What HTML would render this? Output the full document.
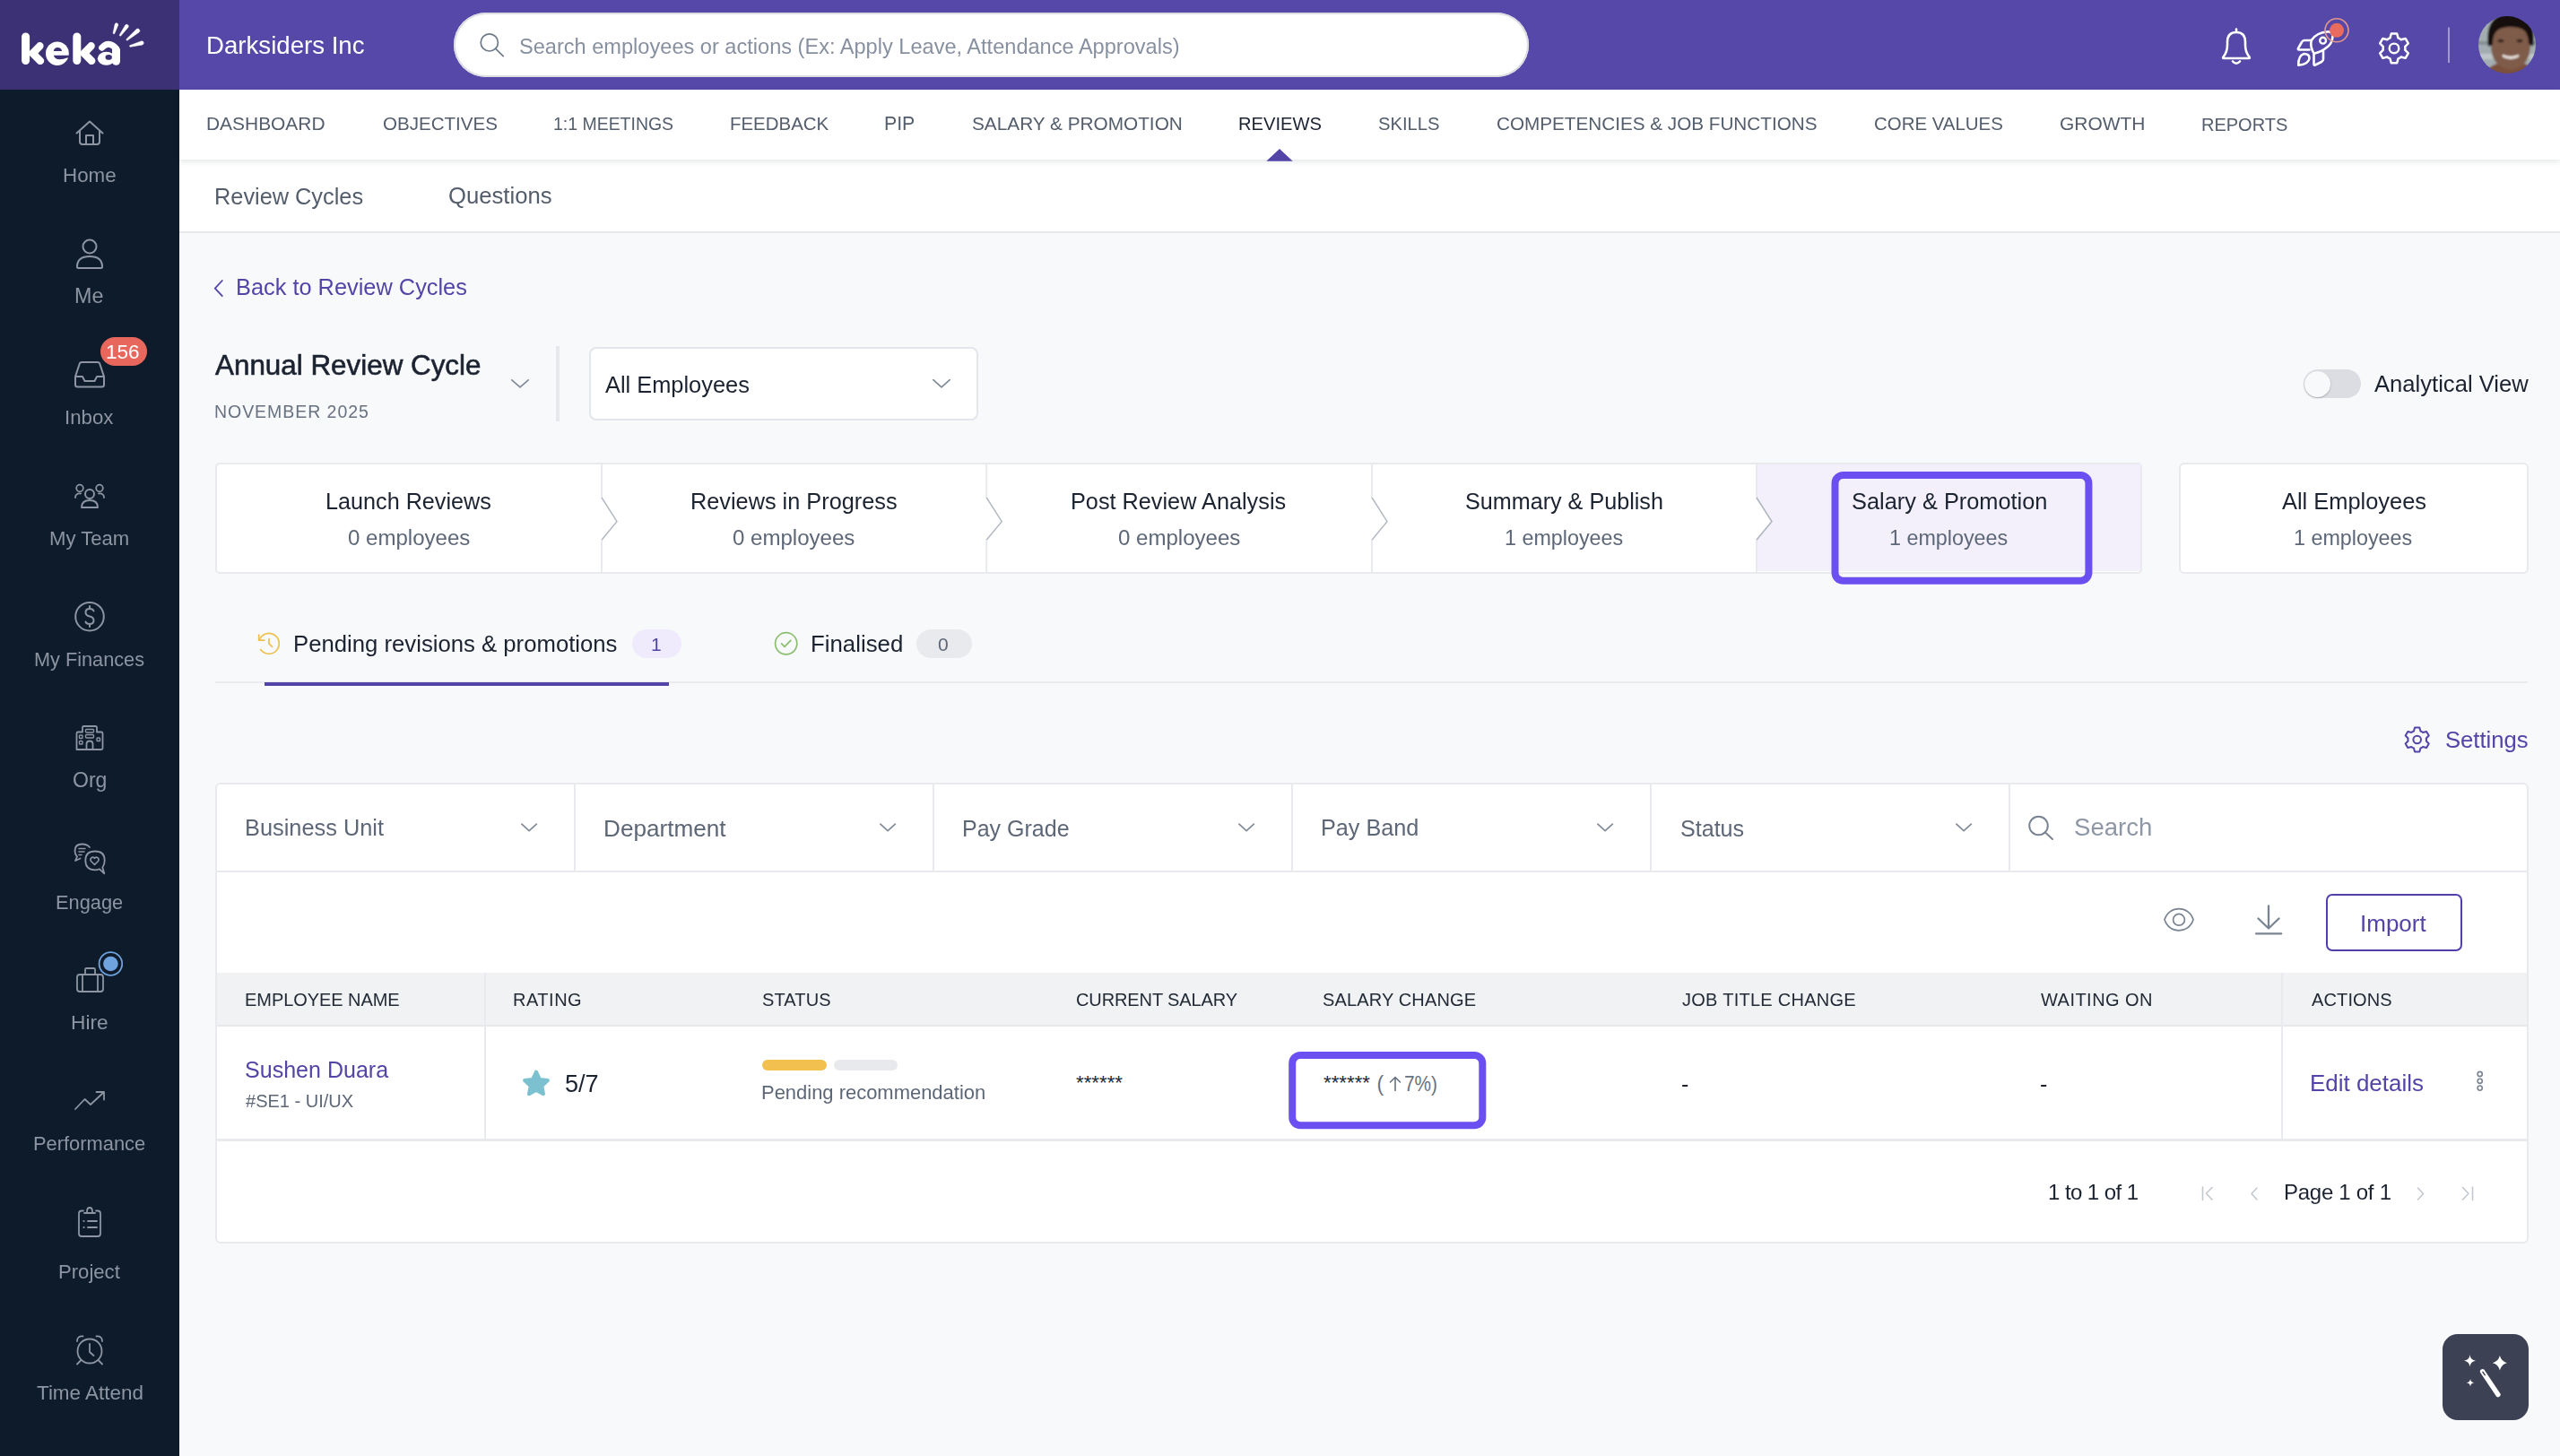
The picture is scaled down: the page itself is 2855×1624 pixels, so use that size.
<!DOCTYPE html>
<html><head><meta charset="utf-8"><title>Keka - Reviews</title>
<style>
html,body{margin:0;padding:0;width:2855px;height:1624px;overflow:hidden;background:#f8f9fb;}
body{position:relative;font-family:"Liberation Sans",sans-serif;}
.b{position:absolute;}
.t{position:absolute;line-height:1;white-space:pre;z-index:5;will-change:transform;}
.ov{position:absolute;left:0;top:0;z-index:4;overflow:visible;}
.ov text{font-family:"Liberation Sans",sans-serif;}
</style></head>
<body>
<div class="b" style="left:0px;top:0px;width:200px;height:1624px;background:#0e1b2a"></div>
<div class="b" style="left:0px;top:0px;width:200px;height:100px;background:#3c3174"></div>
<div class="b" style="left:200px;top:0px;width:2655px;height:100px;background:#5548a9"></div>
<div class="b" style="left:506px;top:14px;width:1199px;height:72px;background:#fff;border-radius:36px;box-shadow:inset 0 0 0 2px #dcdde3"></div>
<div class="b" style="left:200px;top:100px;width:2655px;height:78px;background:#fff;z-index:2;box-shadow:0 2px 6px rgba(20,30,50,0.12)"></div>
<div class="b" style="left:200px;top:178px;width:2655px;height:80px;background:#fff"></div>
<div class="b" style="left:200px;top:258px;width:2655px;height:2px;background:#e6e8ec"></div>
<div class="b" style="left:200px;top:260px;width:2655px;height:1364px;background:#f8f9fb"></div>
<div class="b" style="left:620px;top:385.5px;width:4px;height:84.5px;background:#e6e8ec"></div>
<div class="b" style="left:657px;top:387px;width:434px;height:82px;background:#fff;border:2px solid #e3e6ea;border-radius:8px;box-sizing:border-box"></div>
<div class="b" style="left:2569px;top:412px;width:64px;height:32px;background:#dcdde3;border-radius:16px"></div>
<div class="b" style="left:2570px;top:413.5px;width:29px;height:29px;background:#f8f9fb;border-radius:50%;box-shadow:0 1px 2px rgba(0,0,0,0.25)"></div>
<div class="b" style="left:240px;top:516px;width:2149px;height:124px;background:#fff;border:2px solid #e8eaed;border-radius:5px;box-sizing:border-box"></div>
<div class="b" style="left:2430px;top:516px;width:390px;height:124px;background:#fff;border:2px solid #e8eaed;border-radius:6px;box-sizing:border-box"></div>
<div class="b" style="left:240px;top:759.5px;width:2579px;height:2.5px;background:#e9ebee"></div>
<div class="b" style="left:295px;top:760.5px;width:451px;height:4px;background:#5345a8"></div>
<div class="b" style="left:705px;top:702px;width:55px;height:32px;background:#efebfc;border-radius:16px"></div>
<div class="b" style="left:1022px;top:702px;width:62px;height:32px;background:#e9eaed;border-radius:16px"></div>
<div class="b" style="left:240px;top:873px;width:2580px;height:514px;background:#fff;border:2px solid #e8eaed;border-radius:6px;box-sizing:border-box"></div>
<div class="b" style="left:640px;top:874px;width:2px;height:97px;background:#e8eaed"></div>
<div class="b" style="left:1040px;top:874px;width:2px;height:97px;background:#e8eaed"></div>
<div class="b" style="left:1440px;top:874px;width:2px;height:97px;background:#e8eaed"></div>
<div class="b" style="left:1840px;top:874px;width:2px;height:97px;background:#e8eaed"></div>
<div class="b" style="left:2240px;top:874px;width:2px;height:97px;background:#e8eaed"></div>
<div class="b" style="left:242px;top:970.5px;width:2576px;height:2.5px;background:#e8eaed"></div>
<div class="b" style="left:2594px;top:997px;width:152px;height:64px;background:#fff;border:2.5px solid #4f40ae;border-radius:7px;box-sizing:border-box"></div>
<div class="b" style="left:242px;top:1085px;width:2576px;height:59px;background:#f1f2f4"></div>
<div class="b" style="left:242px;top:1143px;width:2576px;height:2px;background:#e6e8eb"></div>
<div class="b" style="left:540px;top:1085px;width:2px;height:186px;background:#e8eaed"></div>
<div class="b" style="left:2544px;top:1085px;width:2px;height:186px;background:#e8eaed"></div>
<div class="b" style="left:242px;top:1270px;width:2576px;height:2.5px;background:#e8eaed"></div>
<div class="b" style="left:849.8px;top:1181.8px;width:72px;height:12px;background:#f1c04e;border-radius:6px"></div>
<div class="b" style="left:930.2px;top:1181.8px;width:71px;height:12px;background:#e8e9ec;border-radius:6px"></div>
<div class="b" style="left:2724px;top:1488px;width:96px;height:96px;background:#3c4253;border-radius:17px"></div>
<div class="b" style="left:112px;top:376px;width:52px;height:31.6px;background:#e8675d;border-radius:16px;z-index:3"></div>
<svg class="ov" width="2855" height="1624" viewBox="0 0 2855 1624"><g fill="none" stroke="#fff" stroke-linecap="round" stroke-linejoin="round"><path d="M28.6 41 V67.6" stroke-width="9"/><path d="M44.4 51.3 L36.5 59.5 L45 67.9" stroke-width="8.4"/><path d="M85.8 41 V67.6" stroke-width="9"/><path d="M101.6 51.3 L93.7 59.5 L102.2 67.9" stroke-width="8.4"/><path d="M113.6 53.2 Q121 44.8 129.3 53.8" stroke-width="7"/><path d="M129.5 56 V68.2" stroke-width="9"/></g>
<ellipse cx="63.9" cy="59.7" rx="12.9" ry="13.2" fill="#fff"/><path d="M59.8 57 Q60.3 52.9 64.3 52.9 Q68.4 52.9 69.1 57 Z" fill="#3c3174"/><path d="M59.8 61.7 H77.5 V64.6 H74.8 Q71 66.2 66.8 66.2 Q61.2 66.2 59.8 61.7 Z" fill="#3c3174"/>
<ellipse cx="118.6" cy="65.3" rx="9.8" ry="7.5" fill="#fff"/><ellipse cx="121.2" cy="63.9" rx="3.7" ry="2.8" fill="#3c3174"/>
<path d="M127.56 37.74 L131.62 28.14 A1.80 1.80 0 0 0 128.18 27.06 L126.04 37.26 Z" fill="#fff" stroke="#fff" stroke-width="0.6" stroke-linejoin="round"/>
<path d="M134.45 40.26 L142.93 30.46 A2.00 2.00 0 0 0 139.67 28.14 L133.15 39.34 Z" fill="#fff" stroke="#fff" stroke-width="0.6" stroke-linejoin="round"/>
<path d="M141.71 45.22 L155.01 35.99 A2.20 2.20 0 0 0 152.19 32.61 L140.69 43.98 Z" fill="#fff" stroke="#fff" stroke-width="0.6" stroke-linejoin="round"/>
<path d="M145.01 52.37 L158.76 49.92 A2.10 2.10 0 0 0 157.64 45.88 L144.59 50.83 Z" fill="#fff" stroke="#fff" stroke-width="0.6" stroke-linejoin="round"/>
<path d="M85.5 148.5 L100 135.5 L114.5 148.5 M89 146 V158 Q89 161 92 161 H108 Q111 161 111 158 V146 M96 161 V151 H104 V161" fill="none" stroke="#8c95a1" stroke-width="2" stroke-linecap="round" stroke-linejoin="round"/>
<circle cx="100" cy="275" r="7.5" fill="none" stroke="#8c95a1" stroke-width="2" stroke-linecap="round" stroke-linejoin="round"/><path d="M86 297.5 Q86 286 100 286 Q114 286 114 297.5 Q114 299 112.5 299 H87.5 Q86 299 86 297.5 Z" fill="none" stroke="#8c95a1" stroke-width="2" stroke-linecap="round" stroke-linejoin="round"/>
<path d="M84 420 L89 405 Q89.5 404 91 404 H109 Q110.5 404 111 405 L116 420 V429 Q116 431.5 113.5 431.5 H86.5 Q84 431.5 84 429 Z M84 420 H92 L94.5 425 H105.5 L108 420 H116" fill="none" stroke="#8c95a1" stroke-width="2" stroke-linecap="round" stroke-linejoin="round"/>
<circle cx="100" cy="551" r="5" fill="none" stroke="#8c95a1" stroke-width="2" stroke-linecap="round" stroke-linejoin="round"/><path d="M91 566 Q91 558 100 558 Q109 558 109 566 Z" fill="none" stroke="#8c95a1" stroke-width="2" stroke-linecap="round" stroke-linejoin="round"/><circle cx="89" cy="544.5" r="3.8" fill="none" stroke="#8c95a1" stroke-width="1.8" stroke-linecap="round" stroke-linejoin="round"/><circle cx="111" cy="544.5" r="3.8" fill="none" stroke="#8c95a1" stroke-width="1.8" stroke-linecap="round" stroke-linejoin="round"/><path d="M84 555 Q84 550 90 550.5 M116 555 Q116 550 110 550.5" fill="none" stroke="#8c95a1" stroke-width="1.8" stroke-linecap="round" stroke-linejoin="round"/>
<circle cx="100" cy="687.7" r="15.8" fill="none" stroke="#8c95a1" stroke-width="2" stroke-linecap="round" stroke-linejoin="round"/><path d="M104.5 681.5 Q103.5 679 100 679 Q95.5 679 95.5 683 Q95.5 686.5 100 687.5 Q104.5 688.5 104.5 692 Q104.5 696 100 696 Q96 696 95.5 693.5 M100 676 V679 M100 696 V699" fill="none" stroke="#8c95a1" stroke-width="2" stroke-linecap="round" stroke-linejoin="round"/>
<path d="M85.5 836 V818 Q85.5 816.5 87 816.5 H92 V811.5 Q92 810 93.5 810 H106.5 Q108 810 108 811.5 V816.5 H113 Q114.5 816.5 114.5 818 V834.5 Q114.5 836 113 836 Z" fill="none" stroke="#8c95a1" stroke-width="1.8" stroke-linecap="round" stroke-linejoin="round"/><path d="M96.5 836 V830 Q96.5 826.5 100 826.5 Q103.5 826.5 103.5 830 V836" fill="none" stroke="#8c95a1" stroke-width="1.8" stroke-linecap="round" stroke-linejoin="round"/><rect x="95.5" y="813.5" width="9" height="3.5" rx="1" fill="none" stroke="#8c95a1" stroke-width="1.4" stroke-linecap="round" stroke-linejoin="round"/><rect x="95.5" y="819.5" width="9" height="3.5" rx="1" fill="none" stroke="#8c95a1" stroke-width="1.4" stroke-linecap="round" stroke-linejoin="round"/><rect x="88.5" y="820" width="3.5" height="3.5" rx="0.8" fill="none" stroke="#8c95a1" stroke-width="1.4" stroke-linecap="round" stroke-linejoin="round"/><rect x="88.5" y="826.5" width="3.5" height="3.5" rx="0.8" fill="none" stroke="#8c95a1" stroke-width="1.4" stroke-linecap="round" stroke-linejoin="round"/><rect x="108" y="823" width="3.5" height="3.5" rx="0.8" fill="none" stroke="#8c95a1" stroke-width="1.4" stroke-linecap="round" stroke-linejoin="round"/>
<path d="M100 945 Q97 941.5 91.5 941.5 Q83.5 941.5 83.5 949 Q83.5 953 86 955.5 L84 960 L89.5 957.5" fill="none" stroke="#8c95a1" stroke-width="1.8" stroke-linecap="round" stroke-linejoin="round"/><path d="M88 946.5 H95 M88 950 H94 M88 953.5 H91" fill="none" stroke="#8c95a1" stroke-width="1.6" stroke-linecap="round" stroke-linejoin="round"/><path d="M111 969.3 Q108.7 970.3 106 970.3 Q95.3 970.3 95.3 959.8 Q95.3 949.5 106 949.5 Q116.7 949.5 116.7 959.8 Q116.7 964.5 114.3 967.5 L116.3 974.3 Z" fill="none" stroke="#8c95a1" stroke-width="1.8" stroke-linecap="round" stroke-linejoin="round"/><path d="M105.5 964.5 L101.5 960.5 Q100 958 102.5 956.5 Q104.5 955.5 105.5 957.5 Q106.5 955.5 108.5 956.5 Q111 958 109.5 960.5 Z" fill="none" stroke="#8c95a1" stroke-width="1.6" stroke-linecap="round" stroke-linejoin="round"/>
<rect x="86" y="1087" width="29" height="19" rx="3" fill="none" stroke="#8c95a1" stroke-width="1.8" stroke-linecap="round" stroke-linejoin="round"/><path d="M95 1087 V1081.5 Q95 1080 96.5 1080 H104.5 Q106 1080 106 1081.5 V1087 M92 1087 V1106 M109 1087 V1106" fill="none" stroke="#8c95a1" stroke-width="1.8" stroke-linecap="round" stroke-linejoin="round"/>
<circle cx="123.4" cy="1075" r="12.8" fill="#0e1b2a" stroke="#6fa3dd" stroke-width="1.8"/><circle cx="123.4" cy="1075" r="8.3" fill="#6fa3dd"/>
<path d="M84 1237 L94.5 1226 L101 1232 L116 1218 M107.5 1218 H116 V1226.5" fill="none" stroke="#8c95a1" stroke-width="1.8" stroke-linecap="round" stroke-linejoin="round"/>
<path d="M93 1350.5 H91 Q88 1350.5 88 1353.5 V1376 Q88 1379 91 1379 H109 Q112 1379 112 1376 V1353.5 Q112 1350.5 109 1350.5 H107 M94 1353 H106 M97 1351.5 Q97 1347 100 1347 Q103 1347 103 1351.5" fill="none" stroke="#8c95a1" stroke-width="1.8" stroke-linecap="round" stroke-linejoin="round"/><path d="M98 1362 H108 M98 1369 H108" fill="none" stroke="#8c95a1" stroke-width="1.8" stroke-linecap="round" stroke-linejoin="round"/><circle cx="93.5" cy="1362" r="1.1" fill="#8c95a1"/><circle cx="93.5" cy="1369" r="1.1" fill="#8c95a1"/>
<circle cx="100" cy="1507" r="13.5" fill="none" stroke="#8c95a1" stroke-width="1.8" stroke-linecap="round" stroke-linejoin="round"/><path d="M100 1499 V1508 L104.5 1512 M86 1496 Q86 1490 92.5 1490.5 M114 1496 Q114 1490 107.5 1490.5 M90.5 1517 L86 1521.5 M109.5 1517 L114 1521.5" fill="none" stroke="#8c95a1" stroke-width="1.8" stroke-linecap="round" stroke-linejoin="round"/>
<circle cx="545.8" cy="47.4" r="9.6" fill="none" stroke="#6f7a89" stroke-width="1.7" stroke-linecap="round" stroke-linejoin="round"/><path d="M553 54.6 L561.2 62.6" fill="none" stroke="#6f7a89" stroke-width="1.7" stroke-linecap="round" stroke-linejoin="round"/>
<path d="M2494 32.5 V35.5 M2479.5 63.5 Q2484 58 2484 50 V47 Q2484 36 2494 36 Q2504 36 2504 47 V50 Q2504 58 2508.5 63.5 Q2509.5 65 2508 65 H2480 Q2478.5 65 2479.5 63.5 Z M2490 68.5 Q2494 73 2498 68.5" fill="none" stroke="#ffffff" stroke-width="2.6" stroke-linecap="round" stroke-linejoin="round"/>
<path d="M2580.8 59.7 Q2576 53 2577.7 45 Q2583 36.5 2596.5 35.3 Q2601.5 35.8 2601.5 40.5 Q2601 48 2596 52 Q2589 58 2580.8 59.7 Z" fill="none" stroke="#ffffff" stroke-width="2.6" stroke-linecap="round" stroke-linejoin="round"/>
<circle cx="2590.6" cy="45.2" r="3.4" fill="none" stroke="#ffffff" stroke-width="2.4" stroke-linecap="round" stroke-linejoin="round"/>
<path d="M2577.7 45 H2570 Q2568 45 2567 47 L2563 54 Q2562.3 55.5 2564 55.5 H2575.5 M2591 57 V66 Q2591 68 2589 69 L2582 72.5 Q2580.5 73.3 2580.5 71.5 V59.7" fill="none" stroke="#ffffff" stroke-width="2.6" stroke-linecap="round" stroke-linejoin="round"/>
<path d="M2563.3 72.8 Q2563 62 2569.5 60 Q2575.5 60 2575.5 65 Q2575 71.5 2563.3 72.8 Z" fill="none" stroke="#ffffff" stroke-width="2.6" stroke-linecap="round" stroke-linejoin="round"/>
<circle cx="2606" cy="33.8" r="13" fill="none" stroke="#e4968c" stroke-width="1.6"/><circle cx="2606" cy="33.8" r="8" fill="#e96a5f"/>
<path d="M2663.79 43.14 L2665.47 42.46 L2666.81 37.51 L2673.19 37.51 L2674.53 42.46 L2676.21 43.14 L2677.64 44.26 L2682.60 42.94 L2685.79 48.46 L2682.17 52.10 L2682.42 53.90 L2682.17 55.70 L2685.79 59.34 L2682.60 64.86 L2677.64 63.54 L2676.21 64.66 L2674.53 65.34 L2673.19 70.29 L2666.81 70.29 L2665.47 65.34 L2663.79 64.66 L2662.36 63.54 L2657.40 64.86 L2654.21 59.34 L2657.83 55.70 L2657.58 53.90 L2657.83 52.10 L2654.21 48.46 L2657.40 42.94 L2662.36 44.26 Z" fill="none" stroke="#ffffff" stroke-width="2.5" stroke-linecap="round" stroke-linejoin="round"/><circle cx="2670" cy="53.9" r="5.3" fill="none" stroke="#ffffff" stroke-width="2.4" stroke-linecap="round" stroke-linejoin="round"/>
<line x1="2731" y1="30.5" x2="2731" y2="70" stroke="rgba(255,255,255,0.45)" stroke-width="2"/>
<defs><clipPath id="av"><circle cx="2796" cy="50" r="32"/></clipPath></defs>
<defs><filter id="avb" x="-10%" y="-10%" width="120%" height="120%"><feGaussianBlur stdDeviation="0.9"/></filter></defs><g clip-path="url(#av)"><g filter="url(#avb)"><rect x="2760" y="14" width="72" height="72" fill="#a3adb1"/><rect x="2760" y="46" width="72" height="4" fill="#7b878c" opacity="0.8"/><rect x="2760" y="60" width="72" height="6" fill="#c5ccd0" opacity="0.8"/><path d="M2770 86 Q2774 72 2790 70 L2810 70 Q2826 72 2830 86 Z" fill="#7a4f3a"/><path d="M2778 47 Q2777 75 2800 78 Q2823 75 2822 47 Q2821 30 2800 29 Q2779 30 2778 47 Z" fill="#7f5b49"/><path d="M2775 52 Q2770 15 2801 15 Q2830 15 2825 52 L2820 49 Q2820 36 2812 32 Q2800 28 2788 32 Q2779 37 2780 50 Z" fill="#15110e"/><ellipse cx="2789" cy="45.5" rx="3.4" ry="1.8" fill="#2f221c"/><ellipse cx="2810" cy="45.5" rx="3.4" ry="1.8" fill="#2f221c"/><path d="M2791 62 Q2800 68 2809 62 Q2800 65.5 2791 62 Z" fill="#e9e2dc" stroke="#e9e2dc" stroke-width="2.2"/></g></g>
<path d="M1412.3 179.8 L1427 166 L1441.7 179.8 Z" fill="#5345a8"/>
<path d="M247.8 313 L239.8 321.6 L247.8 330.2" fill="none" stroke="#5345a8" stroke-width="1.8" stroke-linecap="round" stroke-linejoin="round"/>
<path d="M570.8 423.8 L580.0 431.8 L589.2 423.8" fill="none" stroke="#808a98" stroke-width="1.7" stroke-linecap="round" stroke-linejoin="round"/>
<path d="M1040.8 423.7 L1050.0 431.8 L1059.2 423.7" fill="none" stroke="#808a98" stroke-width="1.7" stroke-linecap="round" stroke-linejoin="round"/>
<path d="M581.8 919.2 L590.0999999999999 926.6 L598.4 919.2" fill="none" stroke="#808a98" stroke-width="1.7" stroke-linecap="round" stroke-linejoin="round"/>
<path d="M981.8 919.2 L990.0999999999999 926.6 L998.4 919.2" fill="none" stroke="#808a98" stroke-width="1.7" stroke-linecap="round" stroke-linejoin="round"/>
<path d="M1381.8 919.2 L1390.1 926.6 L1398.4 919.2" fill="none" stroke="#808a98" stroke-width="1.7" stroke-linecap="round" stroke-linejoin="round"/>
<path d="M1781.8 919.2 L1790.1 926.6 L1798.4 919.2" fill="none" stroke="#808a98" stroke-width="1.7" stroke-linecap="round" stroke-linejoin="round"/>
<path d="M2181.8 919.2 L2190.1000000000004 926.6 L2198.4 919.2" fill="none" stroke="#808a98" stroke-width="1.7" stroke-linecap="round" stroke-linejoin="round"/>
<path d="M671 518 V555.5 M671 602.6 V638" fill="none" stroke="#e8eaed" stroke-width="2"/><path d="M671 555 L688 581.7 L671 602.3" fill="none" stroke="#b3b9c2" stroke-width="1.5"/>
<path d="M1100.2 518 V555.5 M1100.2 602.6 V638" fill="none" stroke="#e8eaed" stroke-width="2"/><path d="M1100.2 555 L1117.2 581.7 L1100.2 602.3" fill="none" stroke="#b3b9c2" stroke-width="1.5"/>
<path d="M1530 518 V555.5 M1530 602.6 V638" fill="none" stroke="#e8eaed" stroke-width="2"/><path d="M1530 555 L1547 581.7 L1530 602.3" fill="none" stroke="#b3b9c2" stroke-width="1.5"/>
<path d="M1959 518 V555.5 M1959 602.6 V638" fill="none" stroke="#e8eaed" stroke-width="2"/><path d="M1959 555 L1976 581.7 L1959 602.3" fill="none" stroke="#b3b9c2" stroke-width="1.5"/>
<path d="M1959.8 518 V555 L1976.8 581.7 L1959.8 602.3 V637 H2387 V518 Z" fill="#f3f0fc"/>
<path d="M1959 518 V555.5 M1959 602.6 V638" fill="none" stroke="#e8eaed" stroke-width="2"/><path d="M1959 555 L1976 581.7 L1959 602.3" fill="none" stroke="#b3b9c2" stroke-width="1.5"/>
<rect x="2046.5" y="530" width="282.9" height="117.8" rx="9" fill="none" stroke="#6b4ff1" stroke-width="8"/>
<path d="M290.6 724.5 A11.4 11.4 0 1 0 289.3 713.6" fill="none" stroke="#efc04f" stroke-width="1.7" stroke-linecap="round" stroke-linejoin="round"/><path d="M288.7 708.2 V714.2 H294.8" fill="none" stroke="#efc04f" stroke-width="1.7" stroke-linecap="round" stroke-linejoin="round"/><path d="M299.9 712.4 V717.9 L303.6 721.5" fill="none" stroke="#efc04f" stroke-width="1.7" stroke-linecap="round" stroke-linejoin="round"/>
<circle cx="876.7" cy="717.8" r="12.1" fill="none" stroke="#8bbf6f" stroke-width="1.7" stroke-linecap="round" stroke-linejoin="round"/><path d="M871.6 717.9 L875 721.3 L881.8 714.3" fill="none" stroke="#8bbf6f" stroke-width="1.8" stroke-linecap="round" stroke-linejoin="round"/>
<path d="M2690.55 816.08 L2691.95 815.52 L2693.07 811.45 L2698.33 811.45 L2699.45 815.52 L2700.85 816.08 L2702.04 817.01 L2706.11 815.95 L2708.75 820.51 L2705.79 823.51 L2706.00 825.00 L2705.79 826.49 L2708.75 829.49 L2706.11 834.05 L2702.04 832.99 L2700.85 833.92 L2699.45 834.48 L2698.33 838.55 L2693.07 838.55 L2691.95 834.48 L2690.55 833.92 L2689.36 832.99 L2685.29 834.05 L2682.65 829.49 L2685.61 826.49 L2685.40 825.00 L2685.61 823.51 L2682.65 820.51 L2685.29 815.95 L2689.36 817.01 Z" fill="none" stroke="#5345a8" stroke-width="2" stroke-linecap="round" stroke-linejoin="round"/><circle cx="2695.7" cy="825" r="4.3" fill="none" stroke="#5345a8" stroke-width="2" stroke-linecap="round" stroke-linejoin="round"/>
<circle cx="2273.5" cy="921" r="10.3" fill="none" stroke="#7b8493" stroke-width="2" stroke-linecap="round" stroke-linejoin="round"/><path d="M2281 928.5 L2289 936" fill="none" stroke="#7b8493" stroke-width="2" stroke-linecap="round" stroke-linejoin="round"/>
<path d="M2414 1025.8 C2419 1009.5 2441 1009.5 2446 1025.8 C2441 1042 2419 1042 2414 1025.8 Z" fill="none" stroke="#7b8493" stroke-width="1.7" stroke-linecap="round" stroke-linejoin="round"/><circle cx="2430" cy="1025.8" r="6.4" fill="none" stroke="#7b8493" stroke-width="1.7" stroke-linecap="round" stroke-linejoin="round"/>
<path d="M2530 1010.5 V1035 M2518.5 1024.5 L2530 1035.5 L2541.5 1024.5 M2516 1041.3 H2544.2" fill="none" stroke="#7b8493" stroke-width="2.3" stroke-linecap="round" stroke-linejoin="round"/>
<path d="M598.00 1195.60 L601.88 1203.86 L610.93 1205.00 L604.28 1211.24 L605.99 1220.20 L598.00 1215.80 L590.01 1220.20 L591.72 1211.24 L585.07 1205.00 L594.12 1203.86 Z" fill="#7cc1d0" stroke="#7cc1d0" stroke-width="4" stroke-linejoin="round"/>
<text x="1476" y="1214.5" font-family="Liberation Sans" font-size="22" fill="#222a36" textLength="52" lengthAdjust="spacingAndGlyphs">******</text>
<text x="1200" y="1214.5" font-family="Liberation Sans" font-size="22" fill="#222a36" textLength="52" lengthAdjust="spacingAndGlyphs">******</text>
<text x="1535.5" y="1216.5" font-family="Liberation Sans" font-size="23" fill="#687281">(</text>
<path d="M1556 1216.5 V1201.5 M1550.5 1207 L1556 1201.5 L1561.5 1207" fill="none" stroke="#687281" stroke-width="1.6" stroke-linecap="round" stroke-linejoin="round"/>
<text x="1566" y="1216.5" font-family="Liberation Sans" font-size="24" fill="#687281" textLength="37" lengthAdjust="spacingAndGlyphs">7%)</text>
<rect x="1441.2" y="1177" width="212.1" height="78.3" rx="9" fill="none" stroke="#6b4ff1" stroke-width="8"/>
<circle cx="2765.7" cy="1198" r="2.6" fill="none" stroke="#7b8493" stroke-width="1.6"/><circle cx="2765.7" cy="1205.8" r="2.6" fill="none" stroke="#7b8493" stroke-width="1.6"/><circle cx="2765.7" cy="1213.6" r="2.6" fill="none" stroke="#7b8493" stroke-width="1.6"/>
<path d="M2456.5 1324 V1338.5 M2467 1324.5 L2460.5 1331.3 L2467 1338" fill="none" stroke="#c3c8d0" stroke-width="1.6" stroke-linecap="round" stroke-linejoin="round"/>
<path d="M2517 1325 L2511 1331.5 L2517 1338" fill="none" stroke="#c3c8d0" stroke-width="1.6" stroke-linecap="round" stroke-linejoin="round"/>
<path d="M2696.5 1325 L2702.5 1331.5 L2696.5 1338" fill="none" stroke="#c3c8d0" stroke-width="1.6" stroke-linecap="round" stroke-linejoin="round"/>
<path d="M2746.5 1324.5 L2753 1331.3 L2746.5 1338 M2757.5 1324 V1338.5" fill="none" stroke="#c3c8d0" stroke-width="1.6" stroke-linecap="round" stroke-linejoin="round"/>
<path d="M2787.9 1512.1 Q2789.54 1518.6599999999999 2796.1 1520.3 Q2789.54 1521.94 2787.9 1528.5 Q2786.26 1521.94 2779.7000000000003 1520.3 Q2786.26 1518.6599999999999 2787.9 1512.1 Z" fill="#fff"/><path d="M2754.5 1511.3 Q2755.28 1517.02 2761.0 1517.8 Q2755.28 1518.58 2754.5 1524.3 Q2753.72 1518.58 2748.0 1517.8 Q2753.72 1517.02 2754.5 1511.3 Z" fill="#fff"/><path d="M2755 1538.1 Q2755.504 1541.796 2759.2 1542.3 Q2755.504 1542.8039999999999 2755 1546.5 Q2754.496 1542.8039999999999 2750.8 1542.3 Q2754.496 1541.796 2755 1538.1 Z" fill="#fff"/>
<line x1="2768.6" y1="1529.8" x2="2785.9" y2="1555.6" stroke="#fff" stroke-width="5.4" stroke-linecap="round"/><line x1="2768.9" y1="1530.3" x2="2771.2" y2="1533.7" stroke="#3c4253" stroke-width="1.5" stroke-linecap="round"/></svg>
<div class="t" style="left:69.71px;top:184.69px;font-size:22.35px;color:#8c95a1;">Home</div>
<div class="t" style="left:83.34px;top:318.87px;font-size:23.31px;color:#8c95a1;">Me</div>
<div class="t" style="left:72.00px;top:455.30px;font-size:22.22px;color:#8c95a1;">Inbox</div>
<div class="t" style="left:55.23px;top:589.90px;font-size:22.11px;color:#8c95a1;">My Team</div>
<div class="t" style="left:38.01px;top:725.24px;font-size:21.71px;color:#8c95a1;">My Finances</div>
<div class="t" style="left:81.00px;top:859.41px;font-size:23.03px;color:#8c95a1;">Org</div>
<div class="t" style="left:61.96px;top:995.76px;font-size:21.80px;color:#8c95a1;">Engage</div>
<div class="t" style="left:78.78px;top:1129.40px;font-size:22.69px;color:#8c95a1;">Hire</div>
<div class="t" style="left:36.95px;top:1265.08px;font-size:21.89px;color:#8c95a1;">Performance</div>
<div class="t" style="left:64.73px;top:1407.89px;font-size:22.11px;color:#8c95a1;">Project</div>
<div class="t" style="left:41.05px;top:1542.60px;font-size:22.46px;color:#8c95a1;">Time Attend</div>
<div class="t" style="left:118.49px;top:382.29px;font-size:22.58px;color:#ffffff;">156</div>
<div class="t" style="left:229.79px;top:37.16px;font-size:27.64px;color:#ffffff;">Darksiders Inc</div>
<div class="t" style="left:578.82px;top:41.14px;font-size:23.58px;color:#8790a0;">Search employees or actions (Ex: Apply Leave, Attendance Approvals)</div>
<div class="t" style="left:230.33px;top:127.80px;font-size:20.93px;color:#535d6c;">DASHBOARD</div>
<div class="t" style="left:426.97px;top:128.13px;font-size:20.55px;color:#535d6c;">OBJECTIVES</div>
<div class="t" style="left:617.44px;top:129.06px;font-size:19.47px;color:#535d6c;">1:1 MEETINGS</div>
<div class="t" style="left:813.96px;top:128.21px;font-size:20.45px;color:#535d6c;">FEEDBACK</div>
<div class="t" style="left:986.30px;top:127.50px;font-size:21.28px;color:#535d6c;">PIP</div>
<div class="t" style="left:1083.76px;top:127.93px;font-size:20.79px;color:#535d6c;">SALARY &amp; PROMOTION</div>
<div class="t" style="left:1381.19px;top:128.45px;font-size:20.18px;color:#1b2230;">REVIEWS</div>
<div class="t" style="left:1536.89px;top:128.39px;font-size:20.24px;color:#535d6c;">SKILLS</div>
<div class="t" style="left:1669.27px;top:128.01px;font-size:20.69px;color:#535d6c;">COMPETENCIES &amp; JOB FUNCTIONS</div>
<div class="t" style="left:2090.38px;top:128.23px;font-size:20.43px;color:#535d6c;">CORE VALUES</div>
<div class="t" style="left:2297.35px;top:127.79px;font-size:20.95px;color:#535d6c;">GROWTH</div>
<div class="t" style="left:2455.00px;top:128.60px;font-size:20.00px;color:#535d6c;">REPORTS</div>
<div class="t" style="left:238.57px;top:206.65px;font-size:25.33px;color:#535d6c;">Review Cycles</div>
<div class="t" style="left:500.22px;top:206.34px;font-size:25.68px;color:#535d6c;">Questions</div>
<div class="t" style="left:262.97px;top:308.11px;font-size:25.37px;color:#5345a8;">Back to Review Cycles</div>
<div class="t" style="left:240.40px;top:392.36px;font-size:31.39px;color:#1b2230;-webkit-text-stroke:0.6px #1b2230;">Annual Review Cycle</div>
<div class="t" style="left:238.84px;top:449.83px;font-size:19.50px;color:#687281;letter-spacing:0.955px;">NOVEMBER 2025</div>
<div class="t" style="left:674.70px;top:417.09px;font-size:25.40px;color:#1b2230;">All Employees</div>
<div class="t" style="left:2647.70px;top:415.90px;font-size:25.62px;color:#1b2230;">Analytical View</div>
<div class="t" style="left:363.03px;top:547.26px;font-size:25.19px;color:#1b2230;">Launch Reviews</div>
<div class="t" style="left:387.79px;top:588.23px;font-size:24.06px;color:#5d6777;">0 employees</div>
<div class="t" style="left:769.63px;top:547.17px;font-size:25.30px;color:#1b2230;">Reviews in Progress</div>
<div class="t" style="left:817.29px;top:588.23px;font-size:24.06px;color:#5d6777;">0 employees</div>
<div class="t" style="left:1194.33px;top:547.19px;font-size:25.27px;color:#1b2230;">Post Review Analysis</div>
<div class="t" style="left:1246.79px;top:588.23px;font-size:24.06px;color:#5d6777;">0 employees</div>
<div class="t" style="left:1634.14px;top:547.28px;font-size:25.17px;color:#1b2230;">Summary &amp; Publish</div>
<div class="t" style="left:1677.93px;top:588.87px;font-size:23.32px;color:#5d6777;">1 employees</div>
<div class="t" style="left:2064.93px;top:547.11px;font-size:25.36px;color:#1b2230;">Salary &amp; Promotion</div>
<div class="t" style="left:2107.43px;top:588.87px;font-size:23.32px;color:#5d6777;">1 employees</div>
<div class="t" style="left:2544.95px;top:547.07px;font-size:25.41px;color:#1b2230;">All Employees</div>
<div class="t" style="left:2558.43px;top:588.87px;font-size:23.32px;color:#5d6777;">1 employees</div>
<div class="t" style="left:326.94px;top:706.32px;font-size:25.71px;color:#1b2230;">Pending revisions &amp; promotions</div>
<div class="t" style="left:726.11px;top:707.84px;font-size:21.00px;color:#5345a8;">1</div>
<div class="t" style="left:903.54px;top:706.24px;font-size:25.80px;color:#1b2230;">Finalised</div>
<div class="t" style="left:1046.12px;top:707.84px;font-size:21.00px;color:#5d6777;">0</div>
<div class="t" style="left:2727.22px;top:813.18px;font-size:25.64px;color:#5345a8;">Settings</div>
<div class="t" style="left:272.97px;top:911.31px;font-size:25.37px;color:#5d6777;">Business Unit</div>
<div class="t" style="left:672.91px;top:910.64px;font-size:26.15px;color:#5d6777;">Department</div>
<div class="t" style="left:1073.00px;top:911.61px;font-size:25.02px;color:#5d6777;">Pay Grade</div>
<div class="t" style="left:1472.98px;top:911.43px;font-size:25.23px;color:#5d6777;">Pay Band</div>
<div class="t" style="left:1873.75px;top:911.55px;font-size:25.09px;color:#5d6777;">Status</div>
<div class="t" style="left:2312.92px;top:909.42px;font-size:27.57px;color:#8e97a5;">Search</div>
<div class="t" style="left:2632.16px;top:1016.95px;font-size:26.02px;color:#5345a8;">Import</div>
<div class="t" style="left:272.80px;top:1105.40px;font-size:20.00px;color:#222a36;letter-spacing:-0.058px;">EMPLOYEE NAME</div>
<div class="t" style="left:572.40px;top:1105.40px;font-size:20.00px;color:#222a36;letter-spacing:0.520px;">RATING</div>
<div class="t" style="left:849.50px;top:1105.40px;font-size:20.00px;color:#222a36;letter-spacing:0.140px;">STATUS</div>
<div class="t" style="left:1199.50px;top:1105.40px;font-size:20.00px;color:#222a36;letter-spacing:-0.108px;">CURRENT SALARY</div>
<div class="t" style="left:1475.40px;top:1105.40px;font-size:20.00px;color:#222a36;letter-spacing:0.142px;">SALARY CHANGE</div>
<div class="t" style="left:1875.60px;top:1105.40px;font-size:20.00px;color:#222a36;letter-spacing:0.267px;">JOB TITLE CHANGE</div>
<div class="t" style="left:2276.00px;top:1105.40px;font-size:20.00px;color:#222a36;letter-spacing:0.467px;">WAITING ON</div>
<div class="t" style="left:2578.20px;top:1105.40px;font-size:20.00px;color:#222a36;letter-spacing:0.133px;">ACTIONS</div>
<div class="t" style="left:273.15px;top:1180.68px;font-size:25.05px;color:#5345a8;">Sushen Duara</div>
<div class="t" style="left:274.40px;top:1217.57px;font-size:20.03px;color:#5d6777;">#SE1 - UI/UX</div>
<div class="t" style="left:629.72px;top:1195.05px;font-size:27.08px;color:#1b2230;">5/7</div>
<div class="t" style="left:849.24px;top:1207.93px;font-size:21.96px;color:#5d6777;">Pending recommendation</div>
<div class="t" style="left:2575.92px;top:1196.02px;font-size:25.94px;color:#5345a8;">Edit details</div>
<div class="t" style="left:1875.00px;top:1196.83px;font-size:25.00px;color:#1b2230;">-</div>
<div class="t" style="left:2275.00px;top:1196.83px;font-size:25.00px;color:#1b2230;">-</div>
<div class="t" style="left:2283.78px;top:1318.28px;font-size:24.00px;color:#1b2230;letter-spacing:-0.568px;">1 to 1 of 1</div>
<div class="t" style="left:2547.38px;top:1318.28px;font-size:24.00px;color:#1b2230;letter-spacing:-0.276px;">Page 1 of 1</div>
</body></html>
